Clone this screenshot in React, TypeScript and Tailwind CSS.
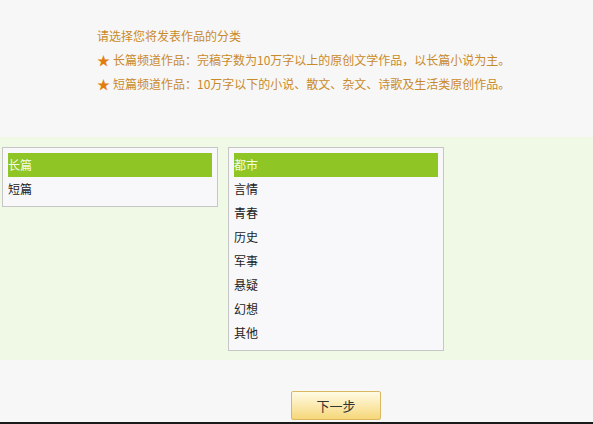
const longItems = ["长篇", "短篇"];
const genres = ["都市", "言情", "青春", "历史", "军事", "悬疑", "幻想", "其他"];

const font = { fontFamily: '"Noto Sans CJK SC", "Liberation Sans", sans-serif' };

function ListBox({ items, selected, className }: { items: string[]; selected: number; className: string }) {
  return (
    <div className={`border border-[#c6c6c6] bg-[#f8f8fa] px-[5px] py-[5px] ${className}`}>
      {items.map((item, i) => (
        <div
          key={item}
          className={`h-[24px] leading-[23px] text-[12px] ${
            i === selected ? "bg-[#8fc626] text-[#f4fbe4]" : "text-[#222]"
          }`}
        >
          {item}
        </div>
      ))}
    </div>
  );
}

export default function App() {
  return (
    <div className="w-[593px] h-[424px] bg-[#f7f7f7] flex flex-col" style={font}>
      <div className="pt-[24px] pl-[97px] h-[137px] text-[12px] leading-[24px] text-[#c98a2c]">
        <div>请选择您将发表作品的分类</div>
        <div className="flex items-center">
          <span className="text-[#e17d0c] text-[13px] w-[16px]">★</span>
          <span>长篇频道作品：完稿字数为10万字以上的原创文学作品，以长篇小说为主。</span>
        </div>
        <div className="flex items-center">
          <span className="text-[#e17d0c] text-[13px] w-[16px]">★</span>
          <span>短篇频道作品：10万字以下的小说、散文、杂文、诗歌及生活类原创作品。</span>
        </div>
      </div>

      <div className="bg-[#f0f8e6] h-[223px] pt-[10px] pl-[2px] flex items-start gap-[10px]">
        <ListBox items={longItems} selected={0} className="w-[216px]" />
        <ListBox items={genres} selected={0} className="w-[216px]" />
      </div>

      <div className="flex-1 flex pt-[31px] pl-[291px]">
        <button
          className="w-[90px] h-[29px] rounded-[2px] border border-[#d9b861] bg-gradient-to-b from-[#fffbe4] to-[#f6d777] text-[13px] text-[#333]"
          style={font}
        >
          下一步
        </button>
      </div>
      <div className="h-[2px] bg-[#1a1a1a]" />
    </div>
  );
}
